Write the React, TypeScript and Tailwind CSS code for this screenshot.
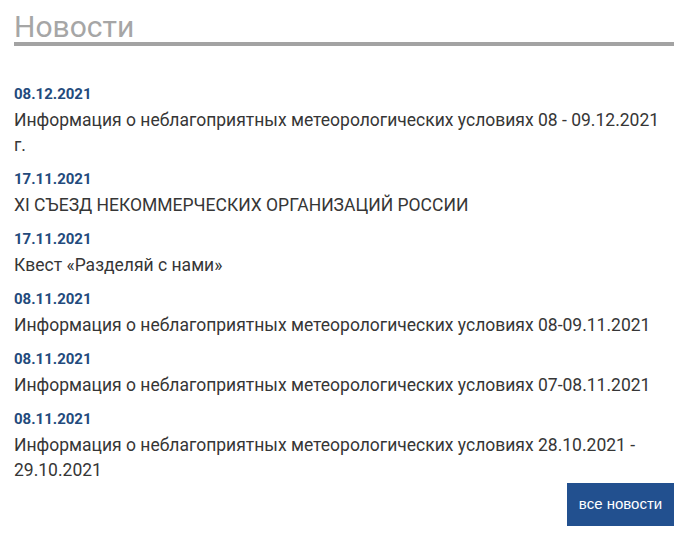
import React from "react";

const items = [
  { date: "08.12.2021", text: "Информация о неблагоприятных метеорологических условиях 08 - 09.12.2021 г." },
  { date: "17.11.2021", text: "XI СЪЕЗД НЕКОММЕРЧЕСКИХ ОРГАНИЗАЦИЙ РОССИИ" },
  { date: "17.11.2021", text: "Квест «Разделяй с нами»" },
  { date: "08.11.2021", text: "Информация о неблагоприятных метеорологических условиях 08-09.11.2021" },
  { date: "08.11.2021", text: "Информация о неблагоприятных метеорологических условиях 07-08.11.2021" },
  { date: "08.11.2021", text: "Информация о неблагоприятных метеорологических условиях 28.10.2021 - 29.10.2021" },
];

export default function App() {
  return (
    <div className="w-[685px] h-[555px] bg-white pl-[14px] pr-[11px] pt-[10px] [font-family:Roboto,'Noto_Sans',sans-serif] overflow-hidden">
      <h2 className="text-[30px] leading-[31px] pt-[1px] text-[#a6a6a6] border-b-4 border-[#a3a3a3] font-normal">Новости</h2>
      <div className="mt-[38px] flex flex-col gap-[11px]">
        {items.map((it, i) => (
          <div key={i} className="flex flex-col">
            <div className="text-[15px] leading-[21px] font-bold text-[#234a7c]">{it.date}</div>
            <div className="mt-[3px] text-[17.5px] leading-[25px] text-[#363636]">{it.text}</div>
          </div>
        ))}
      </div>
      <div className="flex justify-end">
        <div className="w-[107px] h-[43px] bg-[#22508f] text-white text-[15px] flex items-center justify-center [font-family:'Liberation_Sans',Arial,sans-serif]">
          все новости
        </div>
      </div>
    </div>
  );
}
